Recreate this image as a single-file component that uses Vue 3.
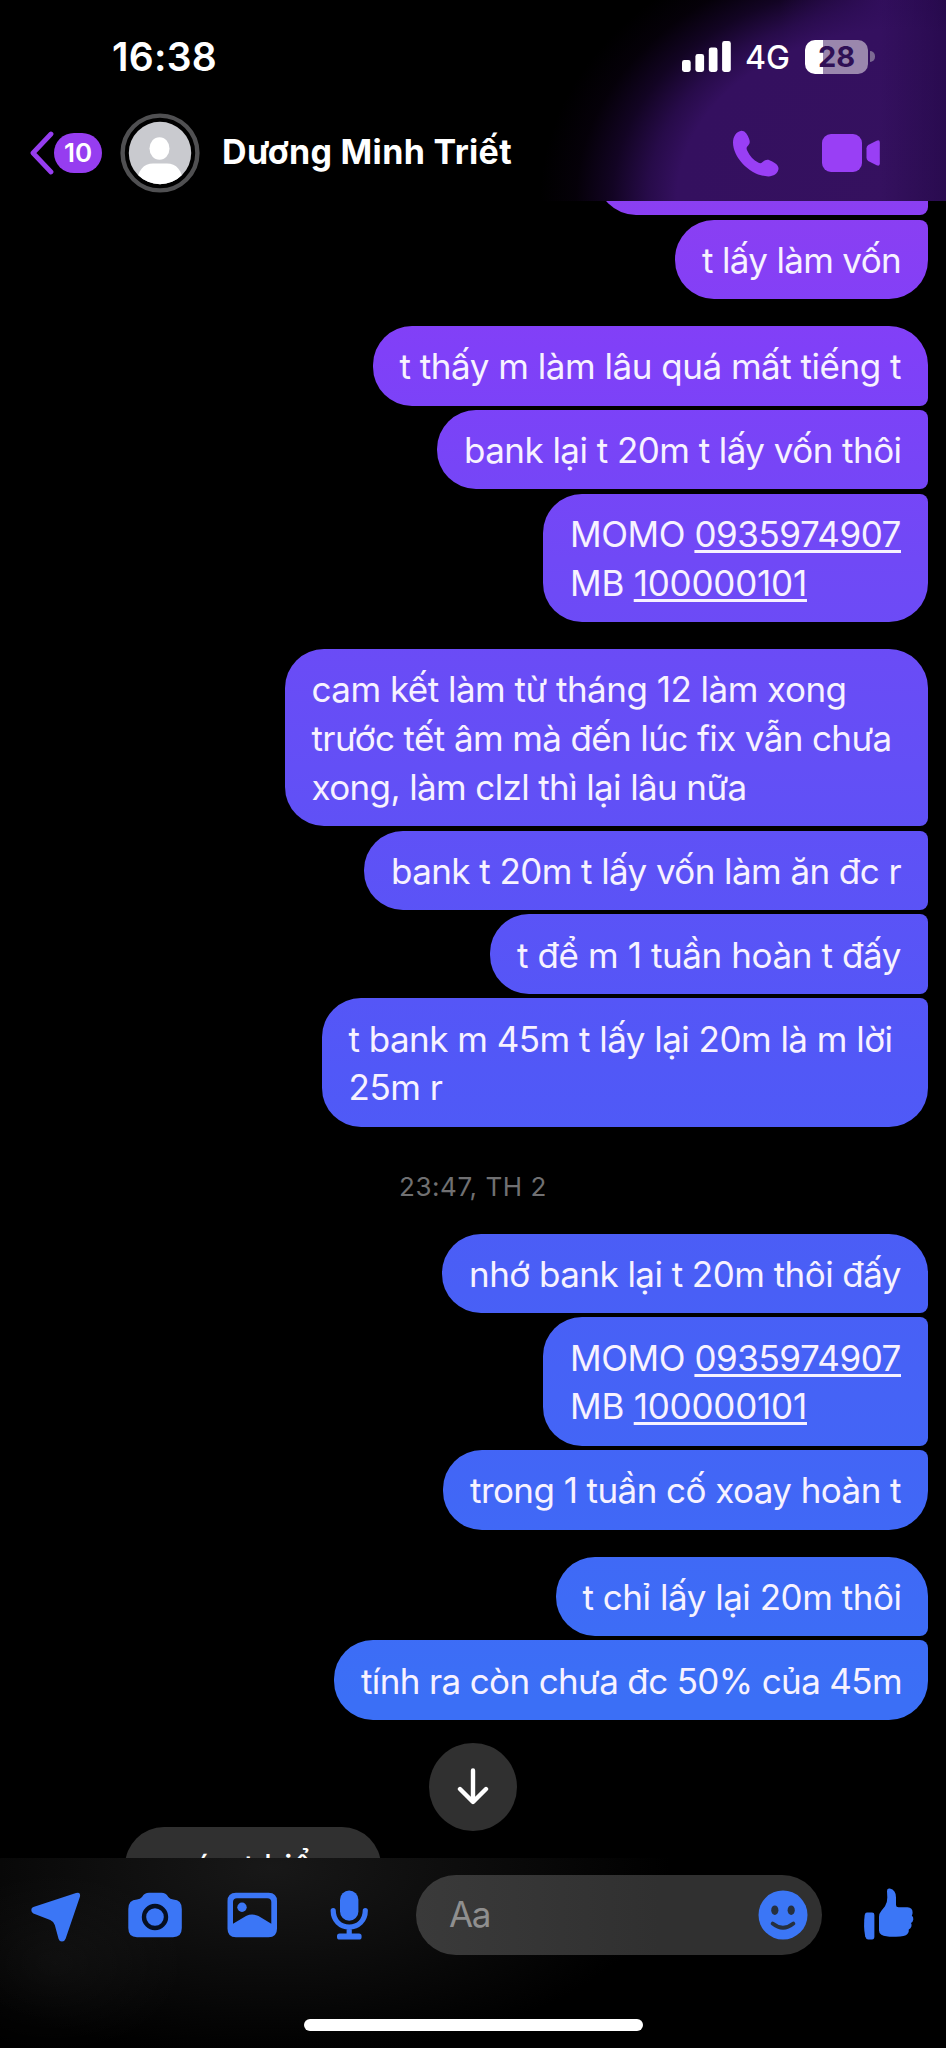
<script setup>
const groups = [
  [
    { w: 331, lines: [{ t: '', w: 0 }] },
    { w: 253, lines: [{ t: 't lấy làm vốn', w: 199 }] }
  ],
  [
    { w: 555.5, lines: [{ t: 't thấy m làm lâu quá mất tiếng t', w: 501.5 }] },
    { w: 491, lines: [{ t: 'bank lại t 20m t lấy vốn thôi', w: 437.5 }] },
    { w: 385, lines: [{ t: 'MOMO ', link: '0935974907', w: 331 }, { t: 'MB ', link: '100000101', w: 237 }] }
  ],
  [
    {
      w: 643.5,
      lines: [
        { t: 'cam kết làm từ tháng 12 làm xong', w: 535 },
        { t: 'trước tết âm mà đến lúc fix vẫn chưa', w: 580 },
        { t: 'xong, làm clzl thì lại lâu nữa', w: 435 }
      ]
    },
    { w: 564, lines: [{ t: 'bank t 20m t lấy vốn làm ăn đc r', w: 510 }] },
    { w: 438, lines: [{ t: 't để m 1 tuần hoàn t đấy', w: 384 }] },
    { w: 606.5, lines: [{ t: 't bank m 45m t lấy lại 20m là m lời', w: 544 }, { t: '25m r', w: 94 }] }
  ],
  [
    { w: 486, lines: [{ t: 'nhớ bank lại t 20m thôi đấy', w: 432 }] },
    { w: 385, lines: [{ t: 'MOMO ', link: '0935974907', w: 331 }, { t: 'MB ', link: '100000101', w: 237 }] },
    { w: 485, lines: [{ t: 'trong 1 tuần cố xoay hoàn t', w: 431 }] }
  ],
  [
    { w: 372.5, lines: [{ t: 't chỉ lấy lại 20m thôi', w: 319 }] },
    { w: 594, lines: [{ t: 'tính ra còn chưa đc 50% của 45m', w: 541 }] }
  ]
]

// Spreads the letters of a single line so that it spans the given width.
const vFit = {
  mounted(el, { value }) {
    const count = [...el.textContent].length
    if (!count) return
    const natural = el.getBoundingClientRect().width
    el.style.letterSpacing = `${(value - natural) / count}px`
  }
}
</script>

<template>
  <div class="phone">
    <header class="header">
      <div class="status">
        <span v-fit="105" class="clock">16:38</span>
        <div class="status-right">
          <svg class="signal" width="49" height="31" viewBox="0 0 49 31" fill="#fff">
            <rect x="0" y="19" width="8.7" height="12" rx="2.4" />
            <rect x="13.4" y="13" width="8.7" height="18" rx="2.4" />
            <rect x="26.8" y="6.5" width="8.7" height="24.5" rx="2.4" />
            <rect x="40.1" y="0" width="8.7" height="31" rx="2.4" />
          </svg>
          <span v-fit="45" class="network">4G</span>
          <div class="battery"><span>28</span></div>
          <i class="nub"></i>
        </div>
      </div>
      <div class="title-row">
        <svg class="chevron" width="24" height="44" viewBox="0 0 24 44">
          <path d="M21 3 L3 22 L21 41" fill="none" stroke="#963df0" stroke-width="4.8" stroke-linecap="round" stroke-linejoin="round" />
        </svg>
        <span class="count">10</span>
        <svg class="avatar" width="80" height="80" viewBox="0 0 80 80">
          <defs><clipPath id="face"><circle cx="40" cy="40" r="31.2" /></clipPath></defs>
          <circle cx="40" cy="40" r="37.4" fill="none" stroke="#505052" stroke-width="4.4" />
          <g clip-path="url(#face)">
            <rect width="80" height="80" fill="#c9cacf" />
            <ellipse cx="39.5" cy="35.5" rx="10" ry="11.3" fill="#fff" />
            <path d="M17 72 C17 57 24 50.5 33 50.5 H47 C56 50.5 63 57 63 72Z" fill="#fff" />
          </g>
        </svg>
        <span v-fit="290" class="name">Dương Minh Triết</span>
        <svg class="call" width="48" height="48" viewBox="0 0 48 48">
          <path
            d="M2 13.5 C2 7.5 5.5 2.5 9.6 1.9 C13.5 1.4 15.6 4.5 17.4 8.2 C19 11.5 19.4 14 17.2 16.4 C15.3 18.4 15.2 19.6 16.3 21.8 C18.8 27 22.2 31.2 27.6 33.8 C29 34.5 30.2 34.3 31.6 33 C35 29.9 37.4 30.2 40.8 32.2 C44.6 34.3 48.2 36.6 47.4 40.6 C46.6 44.6 42.6 47.4 37.4 47.4 C20.5 47.4 2 29.5 2 13.5Z"
            fill="#993ff5" />
        </svg>
        <svg class="video" width="59" height="40" viewBox="0 0 59 40" fill="#993ff5">
          <rect x="0" y="1" width="40" height="38" rx="9" />
          <path d="M44.5 15.3 Q44.5 13.3 46.2 12 L54.6 7.8 Q57.8 6.4 57.8 9.4 V30.6 Q57.8 33.6 54.6 32.2 L46.2 28 Q44.5 26.7 44.5 24.7Z" />
        </svg>
      </div>
    </header>

    <main class="thread">
      <template v-for="(group, g) in groups" :key="g">
        <p v-if="g === 3" class="stamp"><span v-fit="148">23:47, TH 2</span></p>
        <section class="group">
          <div v-for="(msg, m) in group" :key="m" class="bubble" :style="{ width: msg.w + 'px' }">
            <div v-for="line in msg.lines" :key="line.t" class="line">
              <span v-fit="line.w">{{ line.t }}<u v-if="line.link">{{ line.link }}</u></span>
            </div>
          </div>
        </section>
      </template>
      <div class="incoming"><span v-fit="202">quá r t hiểu r</span></div>
      <button class="to-bottom" type="button">
        <svg width="34" height="40" viewBox="0 0 34 40">
          <path d="M17 3.5 V34.5 M4 22 L17 35 L30 22" fill="none" stroke="#fff" stroke-width="4.4" stroke-linecap="round" stroke-linejoin="round" />
        </svg>
      </button>
    </main>

    <footer class="composer">
      <div class="tools">
        <svg class="icon first" viewBox="0 0 60 60">
          <path d="M50 8 Q54.8 6.6 54 11.5 L39.6 53.8 Q38.6 56.6 36 56.6 Q33.4 56.6 32.6 54 L28.8 40 Q27.8 36.6 24.2 35 L7.4 28.4 Q5.3 27.4 5.3 25 Q5.3 22.8 7.4 22.1Z" />
        </svg>
        <svg class="icon" viewBox="0 0 60 60">
          <path d="M3.3 24 Q3.3 14.6 12 14.4 Q15.3 14.4 17 12 Q19.6 7.8 24 7.8 H36.5 Q40.8 7.8 43.3 12 Q45 14.4 48.3 14.4 Q56.8 14.6 56.8 24 V43 Q56.8 52.2 48 52.2 H12 Q3.3 52.2 3.3 43Z" />
          <circle cx="30" cy="32" r="11" fill="none" stroke="#060f22" stroke-width="4.4" />
        </svg>
        <svg class="icon" viewBox="0 0 60 60">
          <path
            fill-rule="evenodd"
            d="M14 7.8 H46.5 Q55 7.8 55 16.3 V43.7 Q55 52.2 46.5 52.2 H14 Q5.5 52.2 5.5 43.7 V16.3 Q5.5 7.8 14 7.8Z M15 13.2 Q11 13.2 11 17 V38.8 L24 31 Q30.2 28.2 36.5 31 L49.3 38.8 V17 Q49.3 13.2 45.3 13.2Z" />
          <circle cx="20" cy="22.3" r="4.7" />
        </svg>
        <svg class="icon" viewBox="0 0 60 60">
          <rect x="21" y="5.5" width="18.4" height="30.2" rx="9.2" />
          <path d="M14.2 25.6 C14.2 35.5 21 42 30.2 42 S46.3 35.5 46.3 25.6 M30.2 42 V50" fill="none" stroke="#3b76f6" stroke-width="5.2" stroke-linecap="round" />
          <rect x="18" y="48.6" width="24.6" height="5.9" rx="2.6" />
        </svg>
        <div class="input">
          <span v-fit="41">Aa</span>
          <svg width="50" height="50" viewBox="0 0 50 50">
            <circle cx="25" cy="25" r="24.5" fill="#3b76f6" />
            <ellipse cx="16.8" cy="20.2" rx="3.6" ry="4.8" fill="#26303f" />
            <ellipse cx="33.2" cy="20.2" rx="3.6" ry="4.8" fill="#26303f" />
            <path d="M14.6 33.6 Q25 42 35.4 33.6" fill="none" stroke="#26303f" stroke-width="3.8" stroke-linecap="round" />
          </svg>
        </div>
        <svg class="icon" viewBox="0 0 60 60">
          <path d="M9 27.6 H14 Q16.4 27.6 16.4 30 V51.5 Q16.4 54.4 14 54.4 H10.2 Q8 54.4 7.2 51.5 Q5.2 41 6.7 30 Q7.2 27.6 9 27.6Z" />
          <path d="M29 6 Q29 3.2 31.8 3.6 Q38 5 38 12.5 V20 Q38 22.3 40.5 22.3 H49.5 Q54.6 22.8 54.6 27.5 Q54.6 29.4 53.8 30.6 Q55.6 32 55.3 34.6 Q55 37 53 38 Q54 39.6 53.4 41.6 Q52.8 43.6 50.8 44.4 Q51.2 47 49.4 49 Q47.2 51.6 38 51.8 Q28 52.2 23.4 49.8 Q21 48.6 21 45.5 V32 Q21 28.5 23.4 25.8 L27 21.2 Q29.4 17.8 29.3 12.5Z" />
        </svg>
      </div>
      <div class="home"></div>
    </footer>
  </div>
</template>

<style>
body {
  background: #000;
}
</style>

<style scoped>
.phone {
  width: 946px;
  height: 2048px;
  display: flex;
  flex-direction: column;
  overflow: hidden;
  background: #000;
  color: #fff;
  font-family: Inter, 'Liberation Sans', sans-serif;
}
.header {
  flex: none;
  height: 201px;
  overflow: hidden;
  background:
    linear-gradient(90deg, transparent 880px, rgba(20, 0, 50, 0.35) 946px),
    radial-gradient(
      ellipse 360px 275px at 900px 200px,
      #35115f 0%,
      #34105f 62%,
      rgba(49, 14, 92, 0.8) 70%,
      rgba(44, 10, 84, 0.42) 80%,
      rgba(38, 4, 66, 0.13) 90%,
      transparent 100%
    ),
    radial-gradient(ellipse 130px 190px at 910px 0, #35115f 20%, rgba(49, 14, 92, 0.6) 50%, transparent 100%);
}
.status {
  display: flex;
  align-items: center;
  justify-content: space-between;
  height: 113px;
  padding: 0 71px 0 112px;
  box-sizing: border-box;
}
.clock {
  font-size: 39px;
  font-weight: 600;
  white-space: nowrap;
}
.status-right {
  display: flex;
  align-items: center;
}
.signal {
  margin-right: 14px;
}
.network {
  font-size: 32px;
  font-weight: 500;
  margin-top: 2px;
  white-space: nowrap;
}
.battery {
  margin-left: 15px;
  width: 63px;
  height: 34px;
  border-radius: 10px;
  background: linear-gradient(90deg, #fff 18px, #9a87ad 18px);
  color: #2f1055;
  font-size: 29px;
  font-weight: 700;
  line-height: 34px;
  text-align: center;
}
.nub {
  width: 5px;
  height: 11px;
  margin-left: 2px;
  border-radius: 0 5px 5px 0;
  background: #7d6a93;
}
.title-row {
  display: flex;
  align-items: center;
  height: 80px;
  padding-left: 30px;
}
.count {
  width: 48px;
  height: 40px;
  border-radius: 20px;
  background: #963df0;
  font-size: 26px;
  font-weight: 600;
  line-height: 40px;
  text-align: center;
}
.avatar {
  margin-left: 17.5px;
}
.name {
  margin-left: 22.5px;
  font-size: 34px;
  font-weight: 700;
  line-height: 44px;
  margin-top: -2px;
  white-space: nowrap;
}
.call {
  margin-left: 219px;
}
.video {
  margin-left: 43px;
}
.thread {
  position: relative;
  flex: 1;
  min-height: 0;
  overflow: hidden;
  display: flex;
  flex-direction: column;
}
.group {
  display: flex;
  flex-direction: column;
  align-items: flex-end;
  gap: 4.4px;
  padding-right: 18px;
  margin-top: 26.7px;
}
.group:first-child {
  margin-top: -65.3px;
}
.bubble {
  box-sizing: border-box;
  padding: 16.2px 0 14.6px 27px;
  border-radius: 39px 8px 8px 39px;
  background: linear-gradient(
      180deg,
      #8b3ff2 200px,
      #8040f8 350px,
      #7049f6 560px,
      #6150f6 800px,
      #5158f7 1070px,
      #495ff6 1290px,
      #4167f6 1500px,
      #3b6ff6 1700px
    )
    fixed;
}
.bubble:first-child {
  border-top-right-radius: 39px;
}
.bubble:last-child {
  border-bottom-right-radius: 39px;
}
.line {
  height: 48.8px;
  font-size: 35px;
  line-height: 48.8px;
  white-space: nowrap;
  color: #f7f2ff;
}
.line u {
  text-decoration-thickness: 2.5px;
  text-underline-offset: 2.5px;
  text-decoration-skip-ink: none;
}
.stamp {
  margin: 0;
  height: 80px;
  padding-top: 40px;
  box-sizing: border-box;
  font-size: 26px;
  line-height: 40px;
  text-align: center;
  white-space: nowrap;
  color: #707072;
}
.incoming {
  flex: none;
  width: 256px;
  height: 80px;
  box-sizing: border-box;
  margin: 107px 0 0 125px;
  padding: 16.2px 0 0 27px;
  border-radius: 39px;
  background: #303030;
  font-size: 35px;
  line-height: 48.8px;
  white-space: nowrap;
}
.to-bottom {
  position: absolute;
  left: 429px;
  bottom: 27px;
  width: 88px;
  height: 88px;
  padding: 0;
  border: 0;
  border-radius: 50%;
  background: #303030;
  display: grid;
  place-items: center;
}
.composer {
  flex: none;
  height: 190px;
  box-sizing: border-box;
  padding-top: 17.4px;
  background:
    radial-gradient(ellipse 130px 90px at 55px 105px, rgba(255, 255, 255, 0.035), transparent),
    radial-gradient(ellipse 400px 190px at 270px 10px, #181818, rgba(14, 14, 14, 0.7) 60%, transparent);
}
.tools {
  display: flex;
  align-items: center;
  gap: 37px;
  padding-left: 26px;
}
.icon {
  flex: none;
  width: 60px;
  height: 60px;
  fill: #3b76f6;
}
.first {
  margin-right: 2px;
}
.input {
  flex: none;
  width: 406px;
  height: 80px;
  box-sizing: border-box;
  padding: 0 14px 2px 33px;
  margin-right: -1px;
  border-radius: 40px;
  background: linear-gradient(90deg, #3a3a3a, #303030 60%);
  display: flex;
  align-items: center;
  justify-content: space-between;
  font-size: 35px;
  color: #8f8f8f;
}
.input svg {
  margin-top: 2px;
}
.home {
  width: 339px;
  height: 12px;
  margin: 63.5px 0 0 304px;
  border-radius: 6px;
  background: #fff;
}
</style>
